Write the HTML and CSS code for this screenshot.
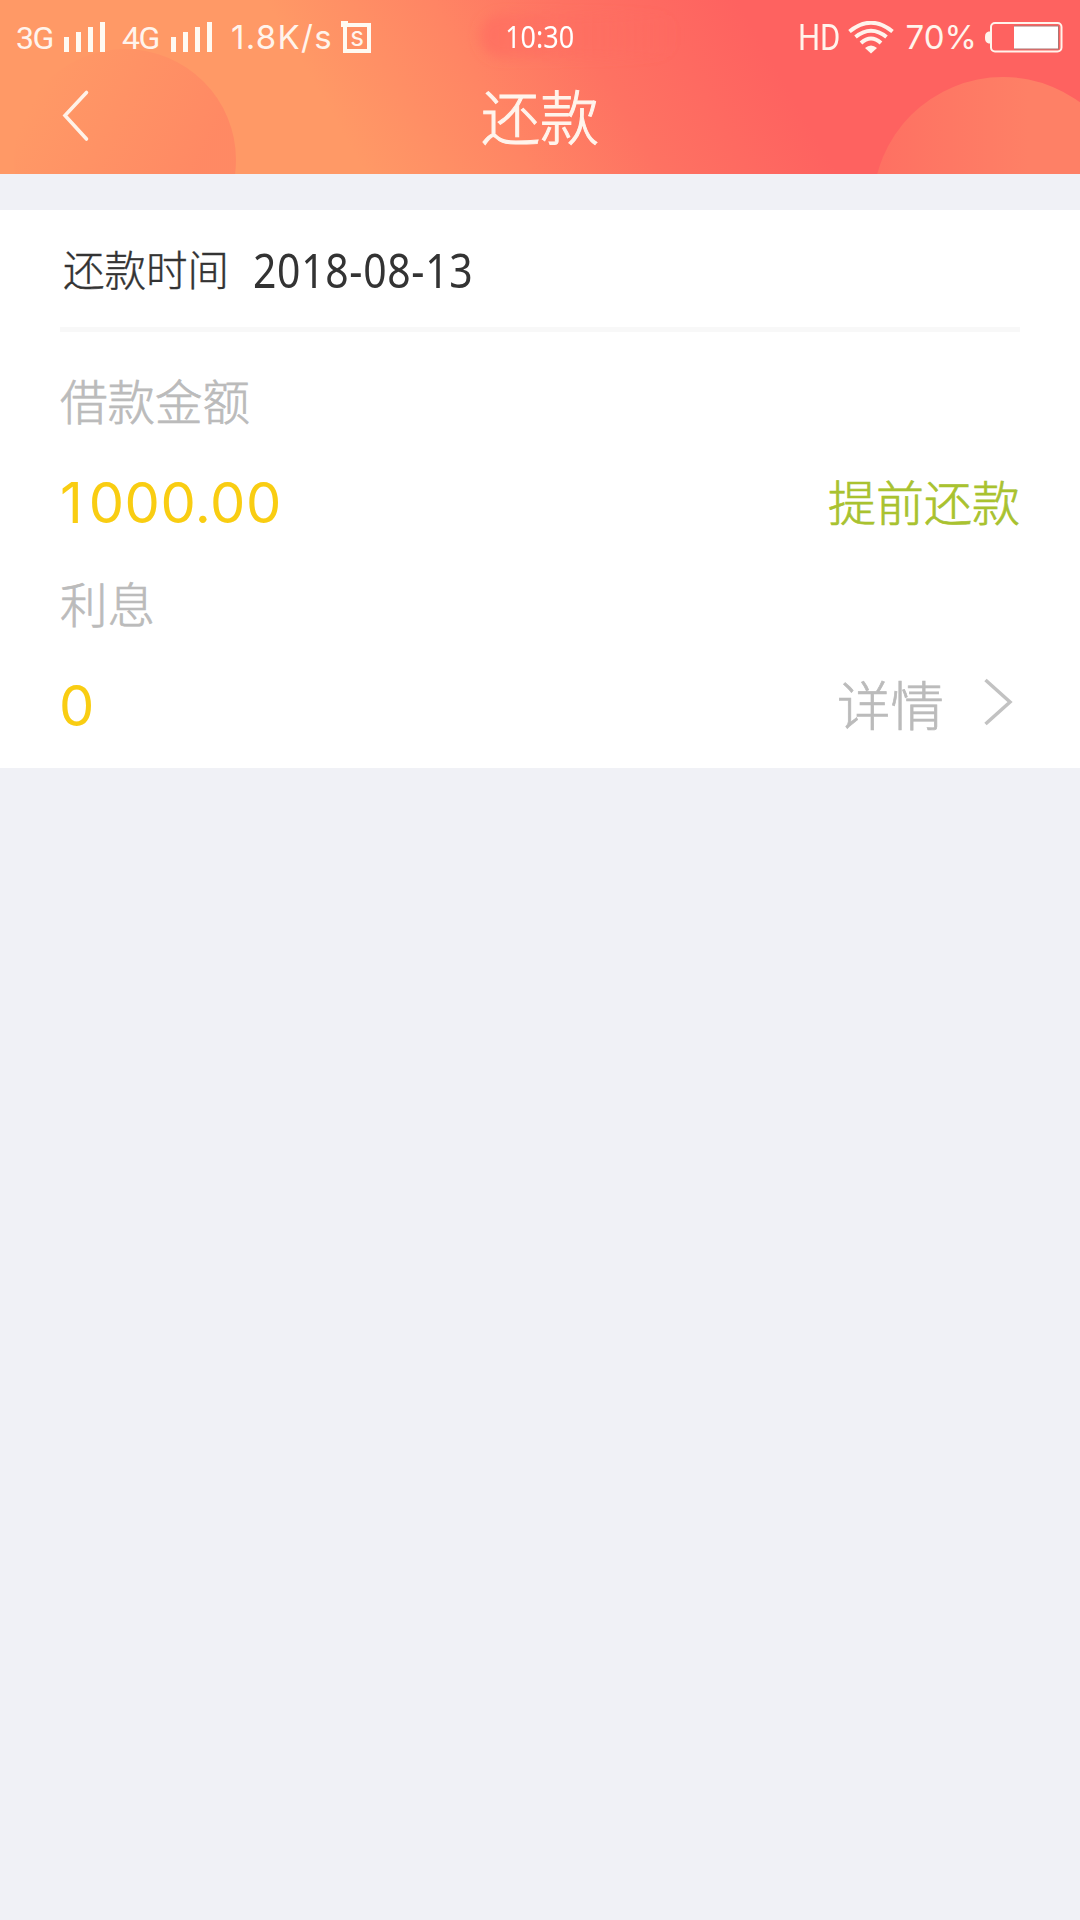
FILE: index.html
```html
<!DOCTYPE html>
<html lang="zh-CN">
<head>
<meta charset="utf-8">
<title>还款</title>
<link rel="stylesheet" href="styles.css">
</head>
<body>
<header class="header">
  <svg class="header-art" width="1080" height="174" viewBox="0 0 1080 174" aria-hidden="true">
    <defs>
      <linearGradient id="leftDisc" x1="0" y1="0.2" x2="0.8" y2="0.6">
        <stop offset="0.1" stop-color="#ff8463" stop-opacity="0"/>
        <stop offset="1" stop-color="#ff8463" stop-opacity=".75"/>
      </linearGradient>
      <linearGradient id="rightDisc" x1="0" y1="0" x2="1" y2="0">
        <stop offset="0" stop-color="#fe7062"/>
        <stop offset=".6" stop-color="#fe8066"/>
        <stop offset="1" stop-color="#fe8066"/>
      </linearGradient>
      <linearGradient id="pill" x1="0" y1="0" x2="1" y2="0">
        <stop offset="0" stop-color="#ff6a60" stop-opacity=".65"/>
        <stop offset="1" stop-color="#ff6a60" stop-opacity="0"/>
      </linearGradient>
      <filter id="soft" x="-20%" y="-50%" width="140%" height="200%"><feGaussianBlur stdDeviation="6"/></filter>
    </defs>
    <circle cx="125" cy="160" r="111" fill="url(#leftDisc)"/>
    <rect x="480" y="14" width="200" height="44" rx="22" fill="url(#pill)" filter="url(#soft)"/>
    <circle cx="1003" cy="207" r="130" fill="url(#rightDisc)"/>
  </svg>
  <div class="status">
    <div class="status-left">
      <span class="net">3G</span>
      <svg class="bars" width="41" height="30" viewBox="0 0 41 30"><path d="M0 15h5v15H0zM12 10h5v20h-5zM24 5h5v25h-5zM36 0h5v30h-5z"/></svg>
      <span class="net net-4g">4G</span>
      <svg class="bars" width="41" height="30" viewBox="0 0 41 30"><path d="M0 15h5v15H0zM12 10h5v20h-5zM24 5h5v25h-5zM36 0h5v30h-5z"/></svg>
      <span class="speed">1.8K/s</span>
      <span class="app-badge">s</span>
    </div>
    <time class="clock">10:30</time>
    <div class="status-right">
      <span class="hd">HD</span>
      <svg class="wifi" width="46" height="33" viewBox="0 0 46 33">
        <g fill="none" stroke="#fff4ec" stroke-width="4">
          <path d="M1.500 10.500Q23-7 44.500 10.500"/>
          <path d="M7.500 16Q23 3.500 38.500 16"/>
          <path d="M13 22Q23 13 33 22"/>
        </g>
        <path d="M17 27Q23 22 29 27L23 32.500Z" fill="#fff4ec"/>
      </svg>
      <span class="percent">70%</span>
      <svg class="battery" width="78" height="31" viewBox="0 0 78 31">
        <path d="M5 9.500C1 9.500 0 12 0 15.500s1 6 5 6z" fill="#fff4ec"/>
        <rect x="6" y="1" width="70.500" height="28.500" rx="4" fill="none" stroke="#fff4ec" stroke-width="2"/>
        <rect x="29" y="3.500" width="45" height="24" fill="#a97774"/>
        <rect x="29" y="4.500" width="44" height="22" fill="#fff"/>
      </svg>
    </div>
  </div>
  <div class="nav">
    <svg class="back" width="28" height="54" viewBox="0 0 28 54"><path d="M24.500 3.500L3 26.500l21.500 23.500" fill="none" stroke="#fff2e8" stroke-width="3.600" stroke-linecap="round"/></svg>
    <h1 class="title">还款</h1>
    <span class="nav-end"></span>
  </div>
</header>
<main class="card">
  <div class="due">
    <span class="due-label">还款时间</span>
    <span class="due-date">2018-08-13</span>
  </div>
  <div class="label">借款金额</div>
  <div class="row">
    <span class="amount"><span class="lead">1</span>000.00</span>
    <span class="prepay">提前还款</span>
  </div>
  <div class="label label-interest">利息</div>
  <div class="row">
    <span class="amount interest">0</span>
    <span class="detail">详情
      <svg width="32" height="52" viewBox="0 0 32 52"><path d="M3.500 4L28 26 3.500 48" fill="none" stroke="#c2c2c2" stroke-width="3.500"/></svg>
    </span>
  </div>
</main>
</body>
</html>
```
FILE: styles.css
```css
* { box-sizing: border-box; }
body {
  margin: 0;
  min-height: 1920px;
  background: #f0f1f6;
  font-family: "Noto Sans CJK SC", sans-serif;
  font-weight: 300;
}
svg { display: block; flex: none; }
span, time { white-space: nowrap; }

.header {
  position: relative;
  height: 174px;
  overflow: hidden;
  color: #fff4ec;
  background: linear-gradient(60deg, #ff9966 0%, #ff9966 31%, #ff8564 45%, #fe7262 56%, #fe6260 71%, #fe6260 100%);
}
.header-art { position: absolute; inset: 0; }
.status {
  position: relative;
  display: grid;
  grid-template-columns: 1fr auto 1fr;
  height: 72px;
  line-height: 72px;
  padding: 0 17px 0 16px;
}
.status-left, .status-right { display: flex; align-items: center; min-width: 0; }
.status-right { justify-content: flex-end; }
.bars { margin-bottom: 2px; fill: #fffaf2; }
.net { width: 48px; font: 400 32px/70px Roboto, sans-serif; letter-spacing: -1.500px; }
.net-4g { width: 50px; margin-left: 16px; padding-left: 1px; }
.speed { width: 110px; padding-left: 19px; font: 400 33px/75px Inter, sans-serif; letter-spacing: 1.300px; }
.app-badge {
  position: relative;
  width: 28px;
  height: 30px;
  margin: 1px 0 0 21px;
  border: 4px solid #fffaf2;
  font: 400 26px/19px Inter, sans-serif;
  text-align: center;
}
.app-badge::before {
  content: "";
  position: absolute;
  left: -6px;
  top: -6px;
  width: 7px;
  height: 6px;
  background: #fffaf2;
}
.clock { font: 400 31px/72px "Noto Sans", sans-serif; transform: scaleX(.87); color: #fff; }
.hd { font: 400 36px/72px Roboto, sans-serif; transform: scaleX(.86); transform-origin: right; }
.wifi { margin-left: 7px; }
.percent { margin-left: 12px; font: 400 33px/75px Inter, sans-serif; }
.battery { margin-left: 8px; }

.nav {
  position: relative;
  display: grid;
  grid-template-columns: 1fr auto 1fr;
  align-items: center;
  height: 88px;
  padding: 0 62px;
}
.title { margin: -3px 0 0; font-size: 59px; font-weight: 300; line-height: 88px; -webkit-text-stroke: 1px; }

.card {
  height: 558px;
  margin-top: 36px;
  padding: 0 60px;
  background: #fff;
  -webkit-text-stroke: .7px;
}
.due {
  display: flex;
  height: 122px;
  padding-left: 3px;
  border-bottom: 5px solid #f8f8f8;
  line-height: 117px;
  color: #333;
}
.due-label { width: 190px; font-size: 41.500px; -webkit-text-stroke: .4px; }
.due-date {
  font: 400 47px/120px "Noto Sans", sans-serif;
  letter-spacing: .8px;
  transform: scaleX(.87);
  transform-origin: left;
  -webkit-text-stroke: 0;
}
.label { height: 80px; margin-top: 33px; font-size: 47.500px; line-height: 70px; color: #bbb; }
.row { display: flex; justify-content: space-between; height: 94px; line-height: 94px; }
.amount {
  font: 400 56px/116px Inter, sans-serif;
  letter-spacing: .5px;
  -webkit-text-stroke: 0;
  color: #f9cd12;
}
.lead { letter-spacing: 6px; }
.prepay { font-size: 48px; line-height: 111px; color: #a9c22f; }
.label-interest { margin-top: 29px; }
.interest { margin-left: -1px; line-height: 117px; }
.detail { display: flex; gap: 38px; padding-right: 6px; font-size: 53.500px; line-height: 110px; color: #bbb; }
.detail svg { margin-top: 28px; }
```
